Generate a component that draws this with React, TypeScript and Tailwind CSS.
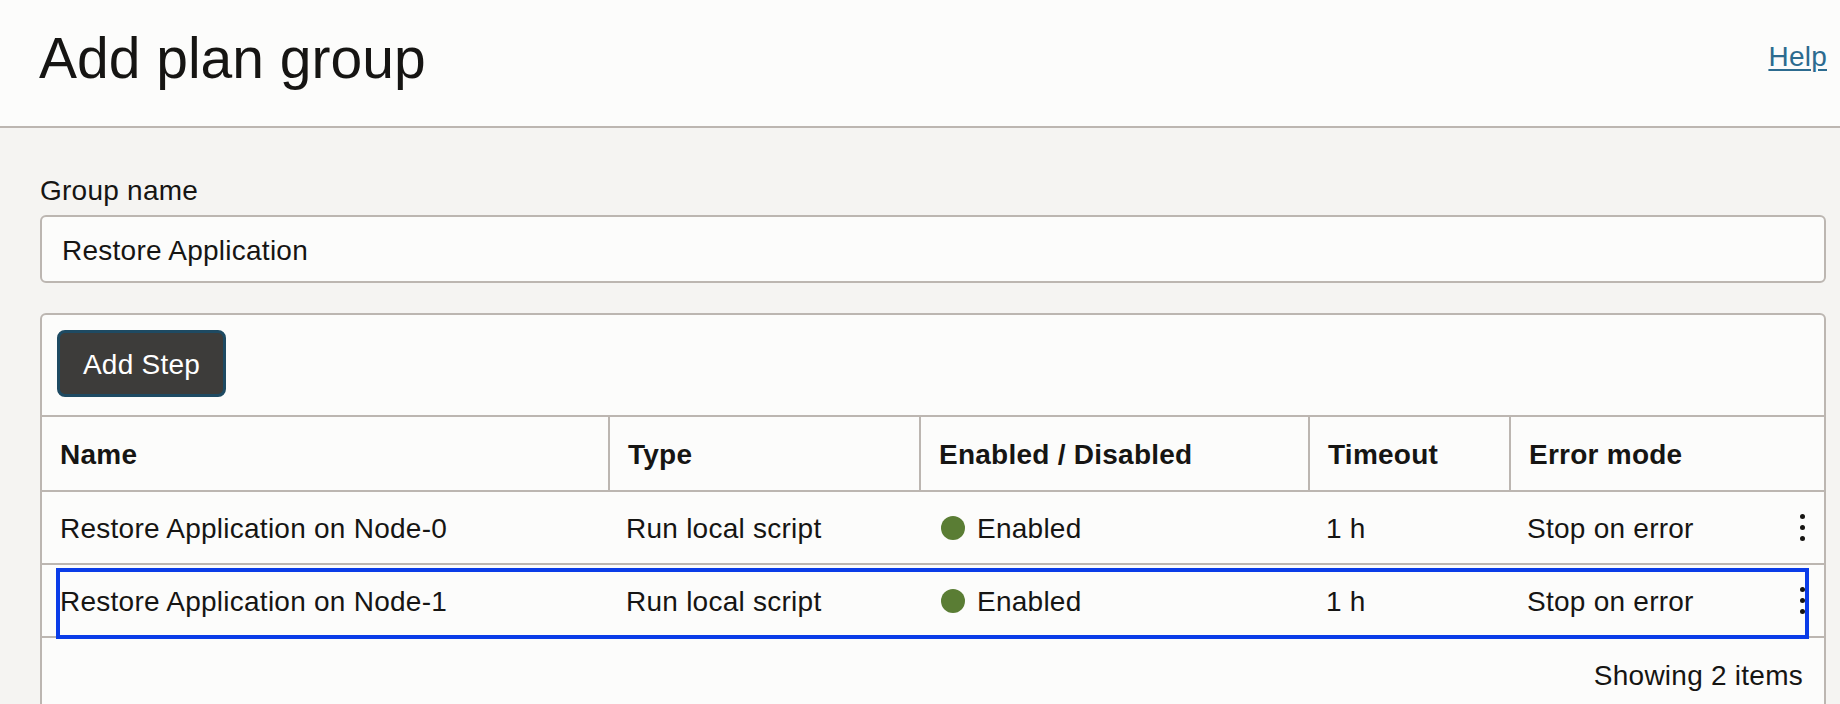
import React from 'react';

const cols = 'grid grid-cols-[566px_311px_389px_201px_1fr]';

const steps = [
  { name: 'Restore Application on Node-0', type: 'Run local script', enabled: true, timeout: '1 h', mode: 'Stop on error' },
  { name: 'Restore Application on Node-1', type: 'Run local script', enabled: true, timeout: '1 h', mode: 'Stop on error' },
];

const Kebab: React.FC = () => (
  <div className="flex flex-col gap-[6px]">
    <span className="block w-[5px] h-[5px] rounded-full bg-[#161513]" />
    <span className="block w-[5px] h-[5px] rounded-full bg-[#161513]" />
    <span className="block w-[5px] h-[5px] rounded-full bg-[#161513]" />
  </div>
);

const App: React.FC = () => {
  const selected = 1;

  return (
    <div className="min-h-screen bg-[#f5f4f2] text-[#161513] tracking-[0.25px] font-['Liberation_Sans',Arial,sans-serif]">
      <header className="h-[128px] bg-[#fcfcfb] border-b-2 border-[#bcb6b1] flex justify-between items-start pl-[39px] pr-[13px]">
        <h1 className="mt-[30px] text-[57px] leading-none font-normal tracking-normal">Add plan group</h1>
        <a href="#" className="mt-[43px] text-[28px] leading-none text-[#2c6b8f] underline decoration-2 underline-offset-[3px]">
          Help
        </a>
      </header>

      <div className="pl-[40px] pr-[14px] pt-[49px]">
        <label className="block text-[28px] leading-none">Group name</label>
        <input
          defaultValue="Restore Application"
          className="mt-[10px] w-full h-[68px] border-2 border-[#bcb6b1] rounded-[6px] bg-[#fcfcfb] pl-[20px] pt-[3px] text-[28px] tracking-[0.25px] outline-none"
        />

        <div className="mt-[30px] border-2 border-[#bcb6b1] rounded-[6px] bg-[#fcfcfb]">
          <div className="pt-[15px] pl-[15px] pb-[18px]">
            <button className="w-[169px] h-[67px] border-[3px] border-[#1e4a62] bg-[#3d3c3a] rounded-[8px] pt-[3px] text-white text-[28px] leading-none">
              Add Step
            </button>
          </div>

          <div className={`${cols} h-[77px] border-y-2 border-[#bcb6b1] font-bold text-[28px] leading-none`}>
            <div className="flex items-center pl-[18px] pt-[3px]">Name</div>
            <div className="flex items-center pl-[18px] pt-[3px] border-l-2 border-[#bcb6b1]">Type</div>
            <div className="flex items-center pl-[18px] pt-[3px] border-l-2 border-[#bcb6b1]">Enabled / Disabled</div>
            <div className="flex items-center pl-[18px] pt-[3px] border-l-2 border-[#bcb6b1]">Timeout</div>
            <div className="flex items-center pl-[18px] pt-[3px] border-l-2 border-[#bcb6b1]">Error mode</div>
          </div>

          {steps.map((s, i) => (
            <div key={s.name} className={`${cols} relative h-[73px] border-b-2 border-[#bcb6b1] text-[28px] leading-none`}>
              <div className="flex items-center pl-[18px] pt-[3px]">{s.name}</div>
              <div className="flex items-center pl-[18px] pt-[3px]">{s.type}</div>
              <div className="flex items-center pl-[22px] pt-[1px] gap-[12px]">
                <span className="block w-[24px] h-[24px] rounded-full bg-[#5a7d34]" />
                <span className="pt-[2px]">{s.enabled ? 'Enabled' : 'Disabled'}</span>
              </div>
              <div className="flex items-center pl-[18px] pt-[3px]">{s.timeout}</div>
              <div className="flex items-center justify-between pl-[18px] pr-[19px]">
                <span className="pt-[3px]">{s.mode}</span>
                <Kebab />
              </div>
              {i === selected && (
                <div className="absolute left-[14px] right-[15px] top-[3px] bottom-[-3px] border-4 border-[#0a3ce8] pointer-events-none" />
              )}
            </div>
          ))}

          <div className="pt-[24px] pb-[30px] pr-[21px] text-right text-[28px] leading-none">Showing 2 items</div>
        </div>
      </div>
    </div>
  );
};

export default App;
